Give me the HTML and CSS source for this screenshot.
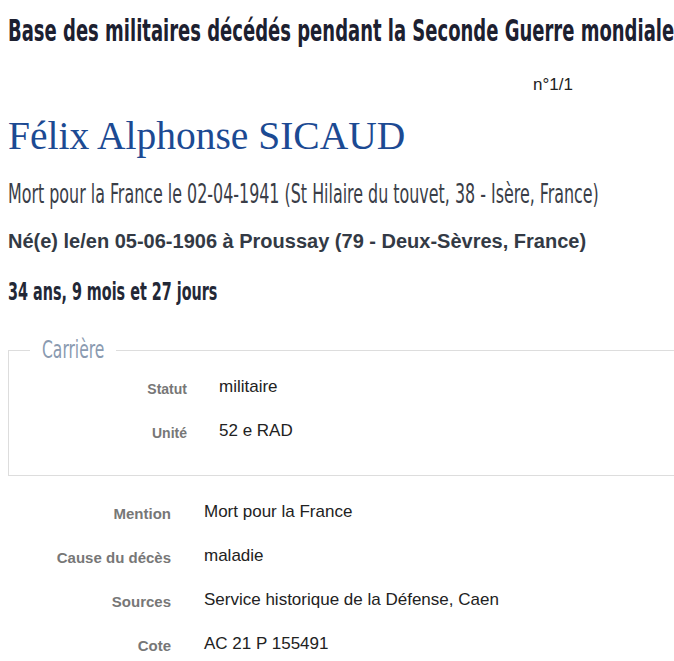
FILE: index.html
```html
<!DOCTYPE html>
<html lang="fr">
<head>
<meta charset="utf-8">
<title>Fiche militaire</title>
<link rel="stylesheet" href="styles.css">
</head>
<body>
<h1 class="title"><span class="cond cond-title">Base des militaires décédés pendant la Seconde Guerre mondiale</span></h1>
<div class="counter">n°1/1</div>
<h2 class="name">Félix Alphonse SICAUD</h2>
<p class="death"><span class="cond cond-death">Mort pour la France le 02-04-1941 (St Hilaire du touvet, 38 - Isère, France)</span></p>
<p class="birth">Né(e) le/en 05-06-1906 à Proussay (79 - Deux-Sèvres, France)</p>
<p class="age"><span class="cond cond-age">34 ans, 9 mois et 27 jours</span></p>
<fieldset class="career">
  <legend class="career-legend"><span class="legend-box"><span class="cond cond-legend">Carrière</span></span></legend>
  <dl class="fields fields-inner">
    <dt>Statut</dt><dd>militaire</dd>
    <dt>Unité</dt><dd>52 e RAD</dd>
  </dl>
</fieldset>
<dl class="fields fields-outer">
  <dt>Mention</dt><dd>Mort pour la France</dd>
  <dt>Cause du décès</dt><dd>maladie</dd>
  <dt>Sources</dt><dd>Service historique de la Défense, Caen</dd>
  <dt>Cote</dt><dd>AC 21 P 155491</dd>
</dl>
</body>
</html>
```
FILE: styles.css
```css
html {
  overflow: hidden;
}
body {
  margin: 8px 0 8px 8px;
  background: #fff;
  font-family: "Liberation Sans", Arial, sans-serif;
  color: #222;
}
.cond {
  display: inline-block;
  white-space: nowrap;
  font-family: "DejaVu Sans Condensed", "DejaVu Sans", sans-serif;
  font-stretch: condensed;
  transform-origin: 0 50%;
}
.title {
  margin: 4px 0 0;
  font-size: 31px;
  line-height: 36px;
  font-weight: normal;
  color: #1c2030;
  white-space: nowrap;
  overflow: hidden;
}
.cond-title {
  font-weight: bold;
  transform: scaleX(0.645);
}
.counter {
  margin: 26px 0 0 525px;
  font-size: 17px;
  line-height: 20px;
  color: #222;
}
.name {
  margin: 19px 0 0;
  font-family: "Liberation Serif", "Times New Roman", serif;
  font-size: 39.5px;
  line-height: 44px;
  font-weight: normal;
  color: #1c4a93;
}
.death {
  margin: 20px 0 0;
  font-size: 26px;
  line-height: 32px;
  color: #3a3e48;
  white-space: nowrap;
  overflow: hidden;
}
.cond-death {
  transform: scaleX(0.68);
}
.birth {
  margin: 19px 0 0;
  font-size: 20px;
  line-height: 24px;
  font-weight: bold;
  color: #333a45;
}
.age {
  margin: 24px 0 0;
  font-size: 24px;
  line-height: 30px;
  color: #232836;
  white-space: nowrap;
  overflow: hidden;
}
.cond-age {
  font-weight: bold;
  transform: scaleX(0.665);
}
.career {
  margin: 29px 0 0;
  padding: 11px 0 32px;
  min-inline-size: 0;
  border: 1px solid #dddddd;
  border-right: none;
}
.career-legend {
  margin-left: 21px;
  padding: 0 13px 0 12px;
  font-size: 24px;
  line-height: 28px;
  color: #8a9ab0;
}
.legend-box {
  display: inline-block;
  width: 61px;
  white-space: nowrap;
}
.cond-legend {
  transform: scaleX(0.72);
}
.fields {
  display: grid;
  row-gap: 20px;
  column-gap: 32px;
  margin: 0;
}
.fields-inner {
  grid-template-columns: 178px 1fr;
}
.fields-outer {
  grid-template-columns: 163px 1fr;
  column-gap: 33px;
  margin-top: 24px;
}
.fields dt {
  text-align: right;
  font-weight: bold;
  color: #777;
}
.fields-inner dt {
  font-size: 14px;
  line-height: 19px;
  padding-top: 5px;
}
.fields-outer dt {
  font-size: 15px;
  line-height: 20px;
  padding-top: 4px;
}
.fields dd {
  margin: 0;
  font-size: 17px;
  line-height: 24px;
  color: #222;
}
```
